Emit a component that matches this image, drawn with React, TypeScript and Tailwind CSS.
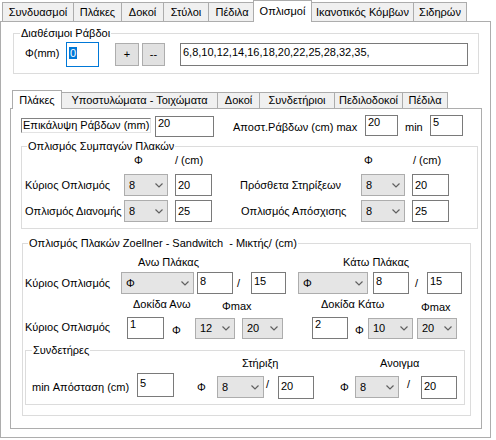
import React from "react";

function TextBox({ c, v }: { c: string; v: string }) {
  return (
    <div className={`shrink-0 border border-[#7a7a7a] bg-white pl-[2px] leading-[13px] ${c}`}>{v}</div>
  );
}

function Chevron() {
  return (
    <svg width="8" height="5" viewBox="0 0 8 5" className="shrink-0">
      <path d="M0.5 0.5 L4 4 L7.5 0.5" fill="none" stroke="#606060" strokeWidth="1.2" />
    </svg>
  );
}

function Combo({ c, v }: { c: string; v: string }) {
  return (
    <div className={`shrink-0 flex items-center justify-between border border-[#adadad] bg-[#e5e5e5] pl-[4px] pr-[4px] ${c}`}>
      <span>{v}</span>
      <Chevron />
    </div>
  );
}

function OuterTab({ c, t }: { c: string; t: string }) {
  return (
    <div className={`shrink-0 flex items-center justify-center h-[19px] border border-b-0 border-[#acacac] bg-[#f0f0f0] ${c}`}>{t}</div>
  );
}

function InnerTab({ c, t }: { c: string; t: string }) {
  return (
    <div className={`shrink-0 flex items-center justify-center h-[16px] -ml-px border border-b-0 border-[#acacac] bg-[#f0f0f0] ${c}`}>{t}</div>
  );
}

export default function App() {
  return (
    <div className="w-[496px] h-[440px] overflow-hidden bg-white font-['Liberation_Sans',Arial,sans-serif] text-[11px] leading-[13px] text-black">
      {/* outer tabs */}
      <div className="flex items-end h-[21px] pl-[2px]">
        <OuterTab c="w-[72px]" t="Συνδυασμοί" />
        <OuterTab c="-ml-px w-[49px]" t="Πλάκες" />
        <OuterTab c="-ml-px w-[43px]" t="Δοκοί" />
        <OuterTab c="-ml-px w-[46px]" t="Στύλοι" />
        <OuterTab c="-ml-px w-[48px]" t="Πέδιλα" />
        <div className="relative z-10 shrink-0 -ml-[3px] -mb-px w-[59px] h-[22px] flex items-center justify-center border border-b-0 border-[#acacac] bg-white">
          Οπλισμοί
        </div>
        <OuterTab c="-ml-px w-[103px]" t="Ικανοτικός Κόμβων" />
        <OuterTab c="-ml-px w-[54px]" t="Σιδηρών" />
      </div>

      {/* outer page */}
      <div className="w-[491px] h-[417px] border border-[#adadad] bg-white">
        <fieldset className="ml-[12px] mt-[4px] w-[466px] h-[48px] border border-[#dcdcdc]">
          <legend className="ml-[6px] px-[1px] leading-[14px]">Διαθέσιμοι Ράβδοι</legend>
          <div className="flex items-start">
            <span className="shrink-0 ml-[11px] mt-[7px] w-[41px]">Φ(mm)</span>
            <div className="shrink-0 mt-[2px] w-[33px] h-[25px] border border-[#0078d7] bg-white pl-[2px] pt-[4px]">
              <span className="inline-block bg-[#0078d7] text-white px-[1px] leading-[12px]">0</span>
            </div>
            <div className="shrink-0 ml-[16px] mt-[3px] w-[24px] h-[23px] flex items-center justify-center border border-[#adadad] bg-[#e1e1e1]">+</div>
            <div className="shrink-0 ml-[3px] mt-[3px] w-[23px] h-[23px] flex items-center justify-center border border-[#adadad] bg-[#e1e1e1]">--</div>
            <TextBox c="ml-[15px] mt-[3px] w-[288px] h-[23px] pt-[2px]" v="6,8,10,12,14,16,18,20,22,25,28,32,35," />
          </div>
        </fieldset>

        {/* inner tab control */}
        <div className="ml-[9px] mt-[16px]">
          <div className="flex items-end h-[18px] pl-[2px]">
            <div className="relative z-10 shrink-0 -mb-px w-[50px] h-[19px] flex items-center justify-center border border-b-0 border-[#acacac] bg-white">
              Πλάκες
            </div>
            <InnerTab c="w-[157px]" t="Υποστυλώματα - Τοιχώματα" />
            <InnerTab c="w-[43px]" t="Δοκοί" />
            <InnerTab c="w-[76px]" t="Συνδετήριοι" />
            <InnerTab c="w-[69px]" t="Πεδιλοδοκοί" />
            <InnerTab c="w-[46px]" t="Πέδιλα" />
          </div>

          <div className="w-[472px] h-[321px] border border-[#adadad] bg-white">
            {/* cover row */}
            <div className="flex items-start">
              <div className="shrink-0 ml-[10px] mt-[9px] w-[130px] h-[15px] pl-[1px] leading-[13px] border border-t-[#828282] border-l-[#828282] border-r-[#e3e3e3] border-b-[#e3e3e3] bg-white">
                Επικάλυψη Ράβδων (mm)
              </div>
              <TextBox c="ml-[4px] mt-[7px] w-[59px] h-[21px]" v="20" />
              <span className="shrink-0 ml-[19px] mt-[12px] w-[132px]">Αποστ.Ράβδων (cm) max</span>
              <TextBox c="mt-[6px] w-[33px] h-[21px]" v="20" />
              <span className="shrink-0 ml-[7px] mt-[12px] w-[25px]">min</span>
              <TextBox c="mt-[6px] w-[33px] h-[21px]" v="5" />
            </div>

            {/* solid slabs group */}
            <fieldset className="ml-[10px] mt-[2px] w-[457px] h-[90px] border border-[#dcdcdc]">
              <legend className="ml-[5px] px-[1px] leading-[14px]">Οπλισμός Συμπαγών Πλακών</legend>
              <div className="flex mt-[1px] h-[13px]">
                <span className="shrink-0 ml-[112px] w-[41px]">Φ</span>
                <span className="shrink-0 w-[189px]">/ (cm)</span>
                <span className="shrink-0 w-[49px]">Φ</span>
                <span className="shrink-0">/ (cm)</span>
              </div>
              <div className="flex items-center mt-[7px] h-[22px]">
                <span className="shrink-0 ml-[3px] w-[99px]">Κύριος Οπλισμός</span>
                <Combo c="w-[44px] h-[22px]" v="8" />
                <TextBox c="ml-[7px] w-[37px] h-[22px] pt-[4px]" v="20" />
                <span className="shrink-0 ml-[28px] w-[121px]">Πρόσθετα Στηρίξεων</span>
                <Combo c="w-[44px] h-[22px]" v="8" />
                <TextBox c="ml-[7px] w-[37px] h-[22px] pt-[4px]" v="20" />
              </div>
              <div className="flex items-center mt-[4px] h-[22px]">
                <span className="shrink-0 ml-[3px] w-[99px]">Οπλισμός Διανομής</span>
                <Combo c="w-[44px] h-[22px]" v="8" />
                <TextBox c="ml-[7px] w-[37px] h-[22px] pt-[4px]" v="25" />
                <span className="shrink-0 ml-[29px] w-[120px]">Οπλισμός Απόσχισης</span>
                <Combo c="w-[44px] h-[22px]" v="8" />
                <TextBox c="ml-[7px] w-[37px] h-[22px] pt-[4px]" v="25" />
              </div>
            </fieldset>

            {/* Zoellner group */}
            <fieldset className="ml-[11px] mt-[7px] w-[449px] h-[180px] border border-[#dcdcdc]">
              <legend className="ml-[5px] px-[1px] leading-[14px]">Οπλισμός Πλακών Zoellner - Sandwitch&nbsp; - Μικτής/ (cm)</legend>
              <div className="flex mt-[6px] h-[13px]">
                <span className="shrink-0 ml-[115px] w-[205px]">Ανω Πλάκας</span>
                <span className="shrink-0">Κάτω Πλάκας</span>
              </div>
              <div className="flex items-center mt-[3px] h-[22px]">
                <span className="shrink-0 ml-[2px] w-[96px]">Κύριος Οπλισμός</span>
                <Combo c="w-[73px] h-[22px]" v="Φ" />
                <TextBox c="ml-[3px] w-[36px] h-[22px] pt-[2px]" v="8" />
                <span className="shrink-0 ml-[4px] w-[14px]">/</span>
                <TextBox c="w-[35px] h-[22px] pt-[2px]" v="15" />
                <Combo c="ml-[12px] w-[70px] h-[22px]" v="Φ" />
                <TextBox c="ml-[5px] w-[36px] h-[22px] pt-[2px]" v="8" />
                <span className="shrink-0 ml-[6px] w-[12px]">/</span>
                <TextBox c="w-[35px] h-[22px] pt-[2px]" v="15" />
              </div>
              <div className="flex items-start h-[20px]">
                <span className="shrink-0 ml-[110px] mt-[4px] w-[89px]">Δοκίδα Ανω</span>
                <span className="shrink-0 mt-[6px] w-[99px]">Φmax</span>
                <span className="shrink-0 mt-[4px] w-[100px]">Δοκίδα Κάτω</span>
                <span className="shrink-0 mt-[7px]">Φmax</span>
              </div>
              <div className="flex items-start">
                <span className="shrink-0 ml-[2px] mt-[7px] w-[102px]">Κύριος Οπλισμός</span>
                <TextBox c="mt-[3px] w-[37px] h-[22px]" v="1" />
                <span className="shrink-0 ml-[8px] mt-[10px] w-[23px]">Φ</span>
                <Combo c="mt-[4px] w-[40px] h-[21px]" v="12" />
                <Combo c="ml-[7px] mt-[4px] w-[41px] h-[21px]" v="20" />
                <TextBox c="ml-[29px] mt-[3px] w-[36px] h-[22px]" v="2" />
                <span className="shrink-0 ml-[7px] mt-[10px] w-[13px]">Φ</span>
                <Combo c="mt-[4px] w-[45px] h-[21px]" v="10" />
                <Combo c="ml-[4px] mt-[4px] w-[40px] h-[21px]" v="20" />
              </div>

              {/* stirrups group */}
              <fieldset className="ml-[2px] mt-[4px] w-[440px] h-[62px] border border-[#dcdcdc]">
                <legend className="ml-[6px] px-[1px] leading-[14px]">Συνδετήρες</legend>
                <div className="flex h-[13px]">
                  <span className="shrink-0 ml-[216px] w-[138px]">Στήριξη</span>
                  <span className="shrink-0">Ανοιγμα</span>
                </div>
                <div className="flex items-start">
                  <span className="shrink-0 ml-[6px] mt-[11px] w-[105px]">min Απόσταση (cm)</span>
                  <TextBox c="mt-[3px] w-[37px] h-[24px] pt-[3px]" v="5" />
                  <span className="shrink-0 ml-[23px] mt-[11px] w-[20px]">Φ</span>
                  <Combo c="mt-[6px] w-[47px] h-[22px]" v="8" />
                  <span className="shrink-0 ml-[2px] mt-[8px] w-[12px]">/</span>
                  <TextBox c="mt-[6px] w-[36px] h-[23px] pt-[3px]" v="20" />
                  <span className="shrink-0 ml-[26px] mt-[11px] w-[15px]">Φ</span>
                  <Combo c="mt-[6px] w-[44px] h-[22px]" v="8" />
                  <span className="shrink-0 ml-[8px] mt-[8px] w-[14px]">/</span>
                  <TextBox c="mt-[6px] w-[36px] h-[23px] pt-[3px]" v="20" />
                </div>
              </fieldset>
            </fieldset>
          </div>
        </div>
      </div>
    </div>
  );
}
